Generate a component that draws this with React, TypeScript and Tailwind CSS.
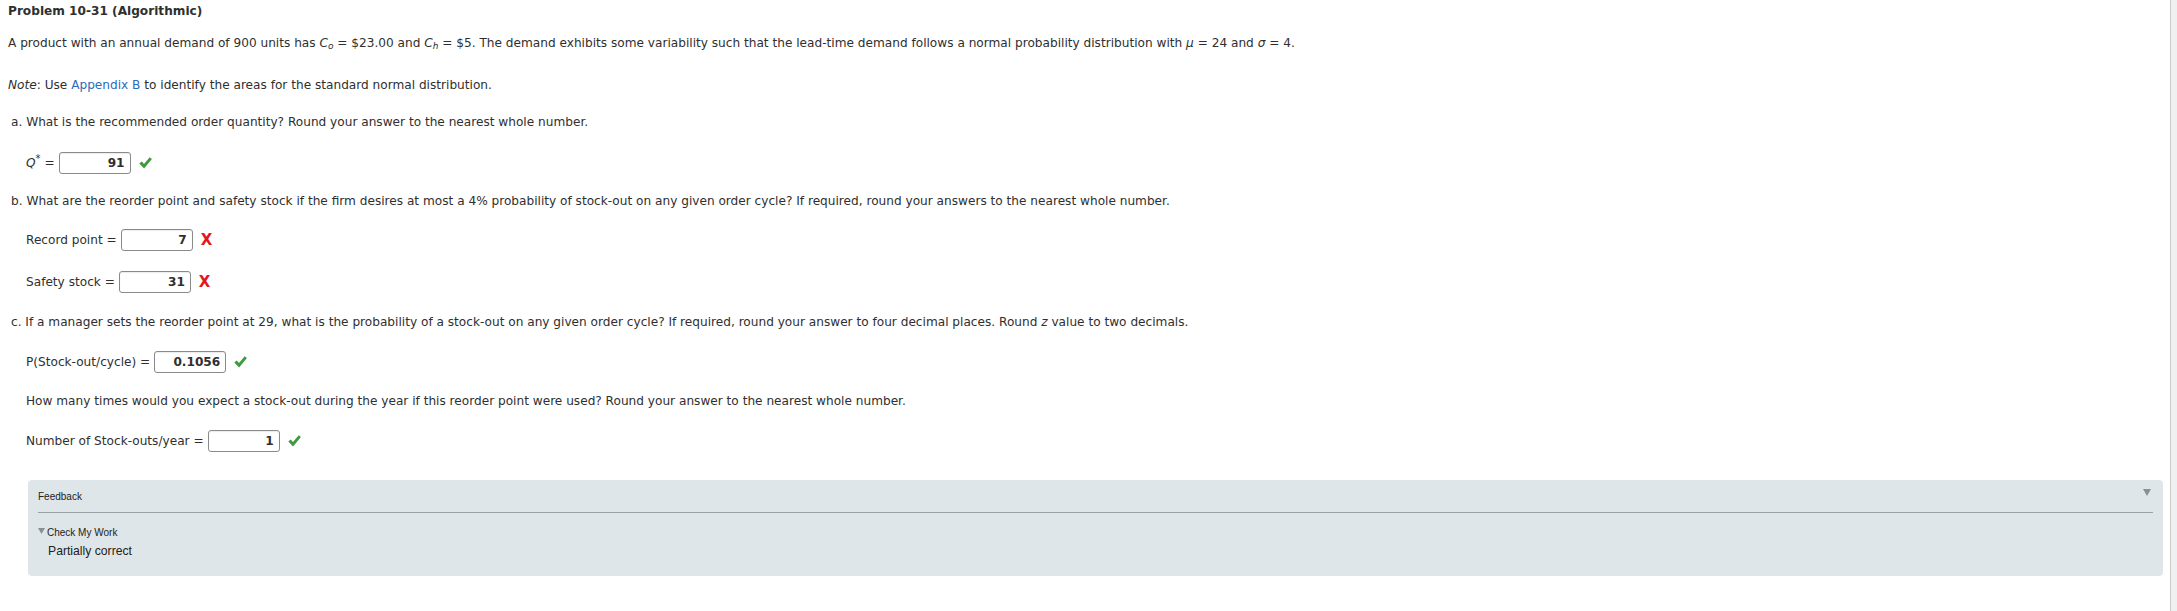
import React from "react";

function Check() {
  return (
    <svg width="13" height="12" viewBox="0 0 13 12" className="ml-[8px] shrink-0">
      <path d="M0.3 6.4 L2.7 4.4 L5 6.9 L10.7 0.3 L12.9 2.1 L5.1 11.4 Z" fill="#3d9a3d" />
    </svg>
  );
}

function Cross() {
  return (
    <span className="ml-[8px] font-bold text-[15px] leading-[15px] text-[#e3161b]">X</span>
  );
}

function Tri({ className = "" }: { className?: string }) {
  return (
    <svg width="7" height="6" viewBox="0 0 7 6" className={`shrink-0 ${className}`}>
      <path d="M0 0 H7 L3.5 6 Z" fill="#8a8f92" />
    </svg>
  );
}

function AnswerRow({
  label,
  value,
  ok,
  className = "",
}: {
  label: React.ReactNode;
  value: string;
  ok: boolean;
  className?: string;
}) {
  return (
    <div className={`flex items-center h-[22px] pl-[26px] ${className}`}>
      <span>{label} =</span>
      <span className="ml-[4px] flex h-[22px] w-[72px] items-center justify-end rounded-[3px] border border-[#8a8a8a] pr-[5px] font-bold shadow-[inset_0_1px_1px_rgba(0,0,0,0.08)]">
        {value}
      </span>
      {ok ? <Check /> : <Cross />}
    </div>
  );
}

export default function App() {
  return (
    <div className="flex h-[611px] w-full bg-white font-['DejaVu_Sans',sans-serif] text-[12.13px] leading-[15px] text-[#2f2f2f]">
      <main className="min-w-0 flex-1 pt-[4px]">
        <h1 className="pl-[8px] font-bold">Problem 10-31 (Algorithmic)</h1>

        <p className="mt-[17px] pl-[8px]">
          A product with an annual demand of 900 units has <i>C</i>
          <sub className="text-[9px] italic">o</sub> = $23.00 and <i>C</i>
          <sub className="text-[9px] italic">h</sub> = $5. The demand exhibits some variability such
          that the lead-time demand follows a normal probability distribution with <i>μ</i> = 24 and{" "}
          <i>σ</i> = 4.
        </p>

        <p className="mt-[27px] pl-[8px]">
          <i>Note</i>: Use <span className="text-[#2a6ebb]">Appendix B</span> to identify the areas for
          the standard normal distribution.
        </p>

        <p className="mt-[22px] pl-[11px]">
          a. What is the recommended order quantity? Round your answer to the nearest whole number.
        </p>
        <AnswerRow
          className="mt-[22px]"
          label={
            <>
              <i>Q</i>
              <sup className="text-[10px]">*</sup>
            </>
          }
          value="91"
          ok
        />

        <p className="mt-[20px] pl-[11px]">
          b. What are the reorder point and safety stock if the firm desires at most a 4% probability of
          stock-out on any given order cycle? If required, round your answers to the nearest whole number.
        </p>
        <AnswerRow className="mt-[20px]" label="Record point" value="7" ok={false} />
        <AnswerRow className="mt-[20px]" label="Safety stock" value="31" ok={false} />

        <p className="mt-[22px] pl-[11px]">
          c. If a manager sets the reorder point at 29, what is the probability of a stock-out on any given
          order cycle? If required, round your answer to four decimal places. Round <i>z</i> value to two
          decimals.
        </p>
        <AnswerRow className="mt-[21px]" label="P(Stock-out/cycle)" value="0.1056" ok />

        <p className="mt-[21px] pl-[26px]">
          How many times would you expect a stock-out during the year if this reorder point were used? Round
          your answer to the nearest whole number.
        </p>
        <AnswerRow className="mt-[21px]" label="Number of Stock-outs/year" value="1" ok />

        <section className="ml-[28px] mr-[7px] mt-[28px] rounded-[4px] bg-[#dfe6e9] px-[10px] pb-[16px] pt-[8px] font-['Liberation_Sans',Arial,sans-serif] text-[#222]">
          <div className="flex h-[16px] items-center justify-between">
            <span className="text-[10px]">Feedback</span>
            <Tri className="mr-[2px] self-start mt-[1px] w-[8px] h-[7px]" />
          </div>
          <div className="mt-[8px] h-px bg-[#9a9fa2]" />
          <div className="mt-[12px] flex h-[14px] items-center">
            <Tri className="-mt-[2px]" />
            <span className="ml-[2px] text-[10px]">Check My Work</span>
          </div>
          <div className="mt-[3px] h-[18px] pl-[10px] text-[12.2px] leading-[18px]">Partially correct</div>
        </section>
      </main>
      <div className="w-[7px] shrink-0 border-l border-[#c9c9c9] bg-[#f0f0f0]" />
    </div>
  );
}
